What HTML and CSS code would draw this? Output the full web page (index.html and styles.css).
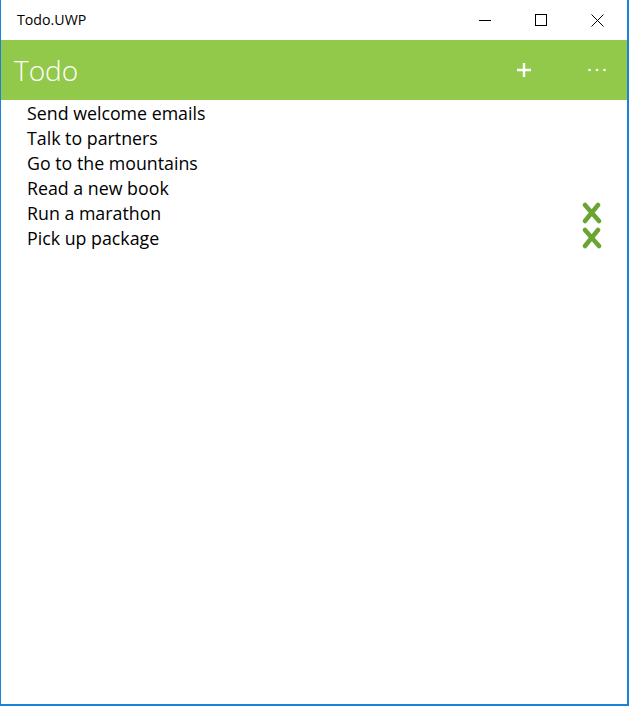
FILE: index.html
```html
<!DOCTYPE html>
<html>
<head>
    <meta name="viewport" content="width=device-width, initial-scale=1">
    <link rel="stylesheet" href="styles.css">
</head>
<body>
    <div class="window">
        <div class="titlebar">
            <span class="app-name">Todo.UWP</span>
            <div class="caption-buttons">
                <span class="caption-btn">
                    <svg width="12" height="12" viewBox="0 0 12 12"><line x1="0" y1="6.5" x2="12" y2="6.5" stroke="#000" stroke-width="1"/></svg>
                </span>
                <span class="caption-btn">
                    <svg width="12" height="12" viewBox="0 0 12 12"><rect x="0.5" y="0.5" width="11" height="11" fill="none" stroke="#000" stroke-width="1"/></svg>
                </span>
                <span class="caption-btn">
                    <svg width="13" height="13" viewBox="0 0 13 13"><path d="M0.5 0.5 L12.5 12.5 M12.5 0.5 L0.5 12.5" stroke="#000" stroke-width="1"/></svg>
                </span>
            </div>
        </div>

        <div class="appbar">
            <h1 class="page-title">Todo</h1>
            <div class="appbar-actions">
                <button class="appbar-btn" title="Add">
                    <svg width="14" height="14" viewBox="0 0 14 14"><path d="M7 0 V14 M0 7 H14" stroke="#fff" stroke-width="2.4"/></svg>
                </button>
                <button class="appbar-btn" title="More">
                    <svg width="18" height="4" viewBox="0 0 18 4"><circle cx="1.5" cy="2" r="1.3" fill="#fff"/><circle cx="9" cy="2" r="1.3" fill="#fff"/><circle cx="16.5" cy="2" r="1.3" fill="#fff"/></svg>
                </button>
            </div>
        </div>

        <ul class="todo-list">
            <li class="todo-item"><span>Send welcome emails</span></li>
            <li class="todo-item"><span>Talk to partners</span></li>
            <li class="todo-item"><span>Go to the mountains</span></li>
            <li class="todo-item"><span>Read a new book</span></li>
            <li class="todo-item done"><span>Run a marathon</span>
                <svg class="done-mark" width="20" height="22" viewBox="0 0 20 22"><path d="M3 3 L17 19 M16 3 L3 19" stroke="#6aa532" stroke-width="4.5" stroke-linecap="round"/></svg>
            </li>
            <li class="todo-item done"><span>Pick up package</span>
                <svg class="done-mark" width="20" height="22" viewBox="0 0 20 22"><path d="M3 3 L17 19 M16 3 L3 19" stroke="#6aa532" stroke-width="4.5" stroke-linecap="round"/></svg>
            </li>
        </ul>
    </div>
</body>
</html>
```

FILE: styles.css
```css
* {
    box-sizing: border-box;
    font-family: 'Open Sans', 'Noto Sans', sans-serif;
}

html, body {
    margin: 0;
    height: 100%;
}

.window {
    height: 706px;
    width: 629px;
    border-left: 1px solid #1883d7;
    border-right: 2px solid #1883d7;
    border-bottom: 2px solid #1883d7;
    background: #fff;
    display: flex;
    flex-direction: column;
}

.titlebar {
    height: 40px;
    display: flex;
    align-items: center;
    justify-content: space-between;
}

.app-name {
    font-size: 14.2px;
    color: #000;
    padding-left: 16px;
    padding-bottom: 1px;
}

.caption-buttons {
    display: flex;
    height: 100%;
    padding-right: 1px;
}

.caption-btn {
    width: 56.5px;
    display: flex;
    align-items: center;
    justify-content: center;
    height: 100%;
}

.appbar {
    height: 60px;
    background: #92c94a;
    display: flex;
    align-items: center;
    justify-content: space-between;
}

.page-title {
    margin: 0;
    padding-left: 13px;
    font-size: 28px;
    font-weight: 300;
    color: #fff;
}

.appbar-actions {
    display: flex;
    height: 100%;
}

.appbar-btn {
    width: 60px;
    height: 100%;
    border: none;
    background: transparent;
    padding: 0;
    display: flex;
    align-items: center;
    justify-content: center;
}

.appbar-btn:first-child {
    margin-right: 13px;
}

.todo-list {
    list-style: none;
    margin: 0;
    padding: 0 25px 0 26px;
}

.todo-item {
    height: 25px;
    display: flex;
    align-items: center;
    justify-content: space-between;
    font-size: 17.8px;
    color: #000;
}
```
